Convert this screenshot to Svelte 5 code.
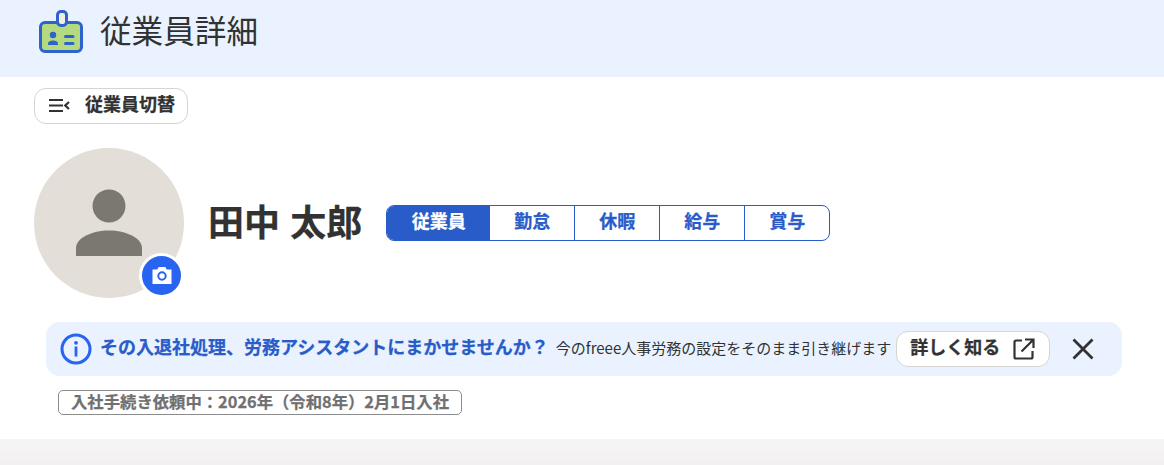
<script>
  const tabs = ['従業員', '勤怠', '休暇', '給与', '賞与'];
</script>

<div class="page">
  <header class="head">
    <svg class="badge" width="46" height="46" viewBox="0 0 46 46">
      <rect x="2.500" y="13.500" width="41" height="29" rx="4.500" fill="#b5d97e" stroke="#2e63cc" stroke-width="3"/>
      <rect x="19.500" y="2.500" width="9" height="14" rx="3.500" fill="#f3efe0" stroke="#2e63cc" stroke-width="3"/>
      <circle cx="15" cy="26" r="3.200" fill="#2e63cc"/>
      <path d="M10 36v-1.500c0-2 2.300-3 5-3s5 1 5 3V36z" fill="#2e63cc"/>
      <rect x="26" y="26" width="10.500" height="3" rx="1.500" fill="#2e63cc"/>
      <rect x="26" y="33" width="10.500" height="3" rx="1.500" fill="#2e63cc"/>
    </svg>
    <h1>従業員詳細</h1>
  </header>

  <main class="main">
    <button class="switch">
      <svg width="22" height="22" viewBox="0 0 22 22">
        <path d="M0 5h14M0 10.500h14M0 16h14" stroke="#323232" stroke-width="2.200" fill="none"/>
        <path d="M20 7l-3.800 3.500 3.800 3.500" stroke="#323232" stroke-width="2.200" fill="none"/>
      </svg>
      <span class="lift">従業員切替</span>
    </button>

    <section class="profile">
      <div class="avatar">
        <svg width="150" height="150" viewBox="0 0 150 150">
          <circle cx="75" cy="75" r="75" fill="#e3dfd8"/>
          <circle cx="75" cy="58" r="16.500" fill="#7b7870"/>
          <path d="M42 108v-8c0-10 16-17.500 33-17.500s33 7.500 33 17.500v8z" fill="#7b7870"/>
        </svg>
        <span class="cam">
          <svg width="20" height="18" viewBox="0 0 20 18">
            <path d="M.500 2.500h4.700l1.500-2.500h6.600l1.500 2.500h4.700v14.500h-19z" fill="#fff"/>
            <circle cx="10" cy="9" r="3.700" fill="none" stroke="#2864f0" stroke-width="2"/>
          </svg>
        </span>
      </div>
      <h2>田中 太郎</h2>
      <nav class="tabs">
        {#each tabs as t, i}
          <span class="tab" class:on={i === 0}>{t}</span>
        {/each}
      </nav>
    </section>

    <aside class="banner">
      <svg class="info" width="32" height="32" viewBox="0 0 32 32">
        <circle cx="16" cy="16" r="14" fill="none" stroke="#2864f0" stroke-width="3"/>
        <circle cx="16" cy="9.800" r="1.900" fill="#2864f0"/>
        <rect x="14.600" y="13.500" width="2.800" height="10" fill="#2864f0"/>
      </svg>
      <strong class="lift">その入退社処理、労務アシスタントにまかせませんか？</strong>
      <span class="sub">今のfreee人事労務の設定をそのまま引き継げます</span>
      <button class="more">
        <span class="lift">詳しく知る</span>
        <svg width="22" height="22" viewBox="0 0 22 22">
          <path d="M9 2.500H3A1.500 1.500 0 0 0 1.500 4v15A1.500 1.500 0 0 0 3 20.500h15a1.500 1.500 0 0 0 1.500-1.500v-6M12 1.500h8.500V10M20 2L8.500 13.500" fill="none" stroke="#323232" stroke-width="2.200"/>
        </svg>
      </button>
      <svg class="close" width="24" height="24" viewBox="0 0 24 24">
        <path d="M2.500 2.500l19 19M21.500 2.500l-19 19" stroke="#323232" stroke-width="2.800" fill="none"/>
      </svg>
    </aside>

    <div class="status">入社手続き依頼中：2026年（令和8年）2月1日入社</div>
  </main>
  <div class="foot"></div>
</div>

<style>
  :global(body) {
    margin: 0;
    background: #fff;
    font-family: "Noto Sans CJK JP", "Noto Sans", sans-serif;
    color: #323232;
  }
  .page { height: 465px; display: flex; flex-direction: column; overflow: hidden; }
  .head {
    height: 77px; flex: none; box-sizing: border-box; background: #e9f2fe;
    display: flex; align-items: flex-start; padding: 9px 0 0 38px; gap: 16px;
  }
  .badge { display: block; }
  h1 { margin: -2px 0 0; font-size: 31.600px; font-weight: 400; line-height: 44px; color: #323232; }
  .main { flex: 1; box-sizing: border-box; padding: 11px 42px 0 34px; }
  button { font-family: inherit; color: inherit; cursor: pointer; }
  .lift { padding-bottom: 6px; }
  .switch, .more, strong, h2, .tab, .status { -webkit-text-stroke: 0.25px currentColor; }
  .switch {
    display: flex; align-items: center; gap: 14px; box-sizing: border-box;
    width: 154px; height: 36px; padding: 0 0 0 14px;
    background: #fff; border: 1px solid #d7d4d2; border-radius: 12px;
    font-size: 18px; font-weight: 700; white-space: nowrap;
  }
  .switch svg { flex: none; }
  .profile { display: flex; align-items: center; margin-top: 24px; }
  .avatar { position: relative; width: 150px; height: 150px; flex: none; }
  .avatar > svg { display: block; }
  .cam {
    position: absolute; left: 105px; top: 105px; width: 39px; height: 39px;
    border: 3px solid #fff; border-radius: 50%;
    background: #2864f0; display: flex; align-items: center; justify-content: center;
  }
  h2 {
    margin: -7px 24px 0 24px; font-size: 36px; font-weight: 700; line-height: 46px;
    white-space: nowrap; word-spacing: 2px;
  }
  .tabs {
    display: flex; border: 1px solid #2a5cc9; border-radius: 8px; overflow: hidden;
    height: 36px; box-sizing: border-box; background: #fff;
  }
  .tab {
    width: 85px; box-sizing: border-box; text-align: center; font-size: 18px; font-weight: 700;
    line-height: 29px; color: #2a5cc9; border-right: 1px solid #2a5cc9;
  }
  .tab:last-child { width: 84px; border-right: 0; }
  .tab.on { width: 103px; background: #2a5cc9; color: #fff; border-right: 0; }
  .banner {
    margin: 24px 0 0 12px; height: 54px; box-sizing: border-box; background: #e9f2fe;
    border-radius: 14px; display: flex; align-items: center; padding-left: 14px;
  }
  .info { flex: none; margin-right: 8px; }
  strong { font-size: 18px; font-weight: 700; color: #2a5cc9; white-space: nowrap; }
  .sub { font-size: 15px; margin-left: 7px; padding-bottom: 3px; white-space: nowrap; }
  .more {
    display: flex; align-items: center; justify-content: space-between; box-sizing: border-box;
    width: 154px; height: 36px; margin-left: 5px; padding: 0 14px 0 13px;
    background: #fff; border: 1px solid #d7d4d2; border-radius: 12px;
    font-size: 18px; font-weight: 700; white-space: nowrap;
  }
  .close { margin-left: 21px; flex: none; }
  .status {
    display: block; width: 404px; box-sizing: border-box; height: 25px; margin: 14px 0 0 24px;
    border: 1px solid #8c8c8c; border-radius: 5px; padding-left: 12px;
    font-size: 16.350px; font-weight: 700; color: #707070; line-height: 20px; white-space: nowrap;
  }
  .foot { height: 26px; flex: none; background: linear-gradient(#f6f4f4, #f2f0f0); }
</style>
